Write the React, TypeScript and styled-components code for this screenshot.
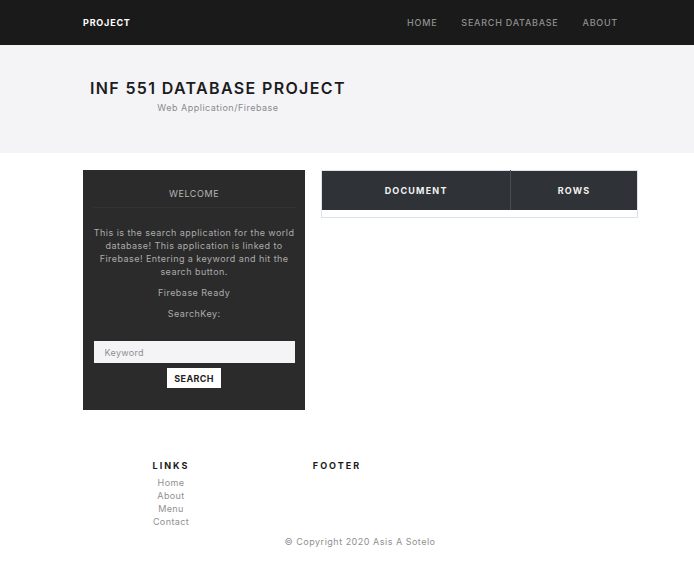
import styled, { createGlobalStyle } from "styled-components";

const GlobalStyle = createGlobalStyle`
  html, body {
    margin: 0;
    padding: 0;
    background: #ffffff;
    font-family: Inter, "Noto Sans", Arial, sans-serif;
    color: #1a1a1a;
  }
  * { box-sizing: border-box; }
`;

// ---------------- nav ----------------
const NavBar = styled.nav`
  height: 45px;
  background: #1a1a1a;
  display: flex;
  align-items: center;
  padding: 0 76px 0 83px;
`;
const Brand = styled.div`
  color: #ffffff;
  font-size: 9px;
  font-weight: 700;
  letter-spacing: 0.8px;
  flex: 1;
`;
const NavLinks = styled.div`
  display: flex;
  gap: 24px;
`;
const NavLink = styled.a`
  color: #8f8f8f;
  font-size: 9px;
  font-weight: 500;
  letter-spacing: 0.75px;
  text-decoration: none;
`;

// ---------------- hero ----------------
const Hero = styled.header`
  height: 108px;
  background: #f4f4f6;
  padding: 33px 0 0 90px;
`;
const HeroInner = styled.div`
  display: inline-flex;
  flex-direction: column;
  align-items: center;
`;
const Title = styled.h1`
  margin: 0;
  font-size: 16px;
  font-weight: 600;
  letter-spacing: 1.35px;
  color: #1c1c1e;
  line-height: 20px;
`;
const Subtitle = styled.div`
  margin-top: 4px;
  font-size: 9px;
  color: #8a8a8a;
  letter-spacing: 0.5px;
`;

// ---------------- main ----------------
const Main = styled.main`
  display: flex;
  gap: 16px;
  padding: 17px 56px 0 83px;
  align-items: flex-start;
`;
const SearchCard = styled.section`
  width: 223px;
  height: 240px;
  background: #2b2b2b;
  padding: 0 10px;
  display: flex;
  flex-direction: column;
  align-items: center;
  text-align: center;
`;
const CardHeader = styled.div`
  width: 100%;
  padding: 18px 0 8px;
  font-size: 9px;
  color: #b5b5b5;
  letter-spacing: 0.6px;
  border-bottom: 1px solid #333333;
`;
const CardText = styled.p<{ $top: number }>`
  margin: ${(p) => p.$top}px 0 0;
  font-size: 9px;
  line-height: 13px;
  color: #ababab;
  letter-spacing: 0.45px;
`;
const KeywordInput = styled.input`
  width: 201px;
  height: 22px;
  margin-top: 21px;
  border: none;
  outline: none;
  background: #f4f4f6;
  padding: 0 11px;
  font-family: inherit;
  font-size: 9px;
  letter-spacing: 0.3px;
  &::placeholder { color: #8f8f8f; }
`;
const SearchButton = styled.button`
  margin-top: 5px;
  width: 54px;
  height: 20px;
  border: none;
  background: #ffffff;
  font-family: inherit;
  font-size: 9px;
  font-weight: 700;
  color: #222;
  letter-spacing: 0.4px;
  padding: 0;
`;

const ResultTable = styled.table`
  width: 318px;
  border-collapse: collapse;
  border: 1px solid #dee2e6;
`;
const HeadCell = styled.th<{ $w: number }>`
  width: ${(p) => p.$w}px;
  height: 39px;
  background: #2f3337;
  color: #f1f1f1;
  font-size: 9px;
  font-weight: 700;
  letter-spacing: 1.2px;
  border-right: 1px solid #454d55;
  &:last-child { border-right: none; }
`;
const EmptyCell = styled.td`
  height: 8px;
  padding: 0;
`;

// ---------------- footer ----------------
const Footer = styled.footer`
  padding: 50px 0 0 88px;
`;
const FooterCols = styled.div`
  display: grid;
  grid-template-columns: 166px 166px;
`;
const FooterCol = styled.div`
  display: flex;
  flex-direction: column;
  align-items: center;
`;
const FooterHeading = styled.h4`
  margin: 0 0 5px;
  font-size: 9px;
  font-weight: 700;
  letter-spacing: 2px;
  color: #1a1a1a;
  line-height: 11px;
`;
const FooterLink = styled.a`
  font-size: 9px;
  line-height: 13px;
  color: #8f8f8f;
  text-decoration: none;
  letter-spacing: 0.4px;
`;
const Copyright = styled.div`
  margin: 8px 0 0 -5px;
  width: 554px;
  text-align: center;
  font-size: 9px;
  color: #8f8f8f;
  letter-spacing: 0.5px;
`;

export default function App() {
  return (
    <>
      <GlobalStyle />
      <NavBar>
        <Brand>PROJECT</Brand>
        <NavLinks>
          <NavLink href="#">HOME</NavLink>
          <NavLink href="#">SEARCH DATABASE</NavLink>
          <NavLink href="#">ABOUT</NavLink>
        </NavLinks>
      </NavBar>

      <Hero>
        <HeroInner>
          <Title>INF 551 DATABASE PROJECT</Title>
          <Subtitle>Web Application/Firebase</Subtitle>
        </HeroInner>
      </Hero>

      <Main>
        <SearchCard>
          <CardHeader>WELCOME</CardHeader>
          <CardText $top={18}>
            This is the search application for the world database! This
            application is linked to Firebase! Entering a keyword and hit the
            search button.
          </CardText>
          <CardText $top={8}>Firebase Ready</CardText>
          <CardText $top={8}>SearchKey:</CardText>
          <KeywordInput placeholder="Keyword" />
          <SearchButton>SEARCH</SearchButton>
        </SearchCard>

        <ResultTable>
          <thead>
            <tr>
              <HeadCell $w={189}>DOCUMENT</HeadCell>
              <HeadCell $w={127}>ROWS</HeadCell>
            </tr>
          </thead>
          <tbody>
            <tr>
              <EmptyCell />
              <EmptyCell />
            </tr>
          </tbody>
        </ResultTable>
      </Main>

      <Footer>
        <FooterCols>
          <FooterCol>
            <FooterHeading>LINKS</FooterHeading>
            <FooterLink href="#">Home</FooterLink>
            <FooterLink href="#">About</FooterLink>
            <FooterLink href="#">Menu</FooterLink>
            <FooterLink href="#">Contact</FooterLink>
          </FooterCol>
          <FooterCol>
            <FooterHeading>FOOTER</FooterHeading>
          </FooterCol>
        </FooterCols>
        <Copyright>© Copyright 2020 Asis A Sotelo</Copyright>
      </Footer>
    </>
  );
}
